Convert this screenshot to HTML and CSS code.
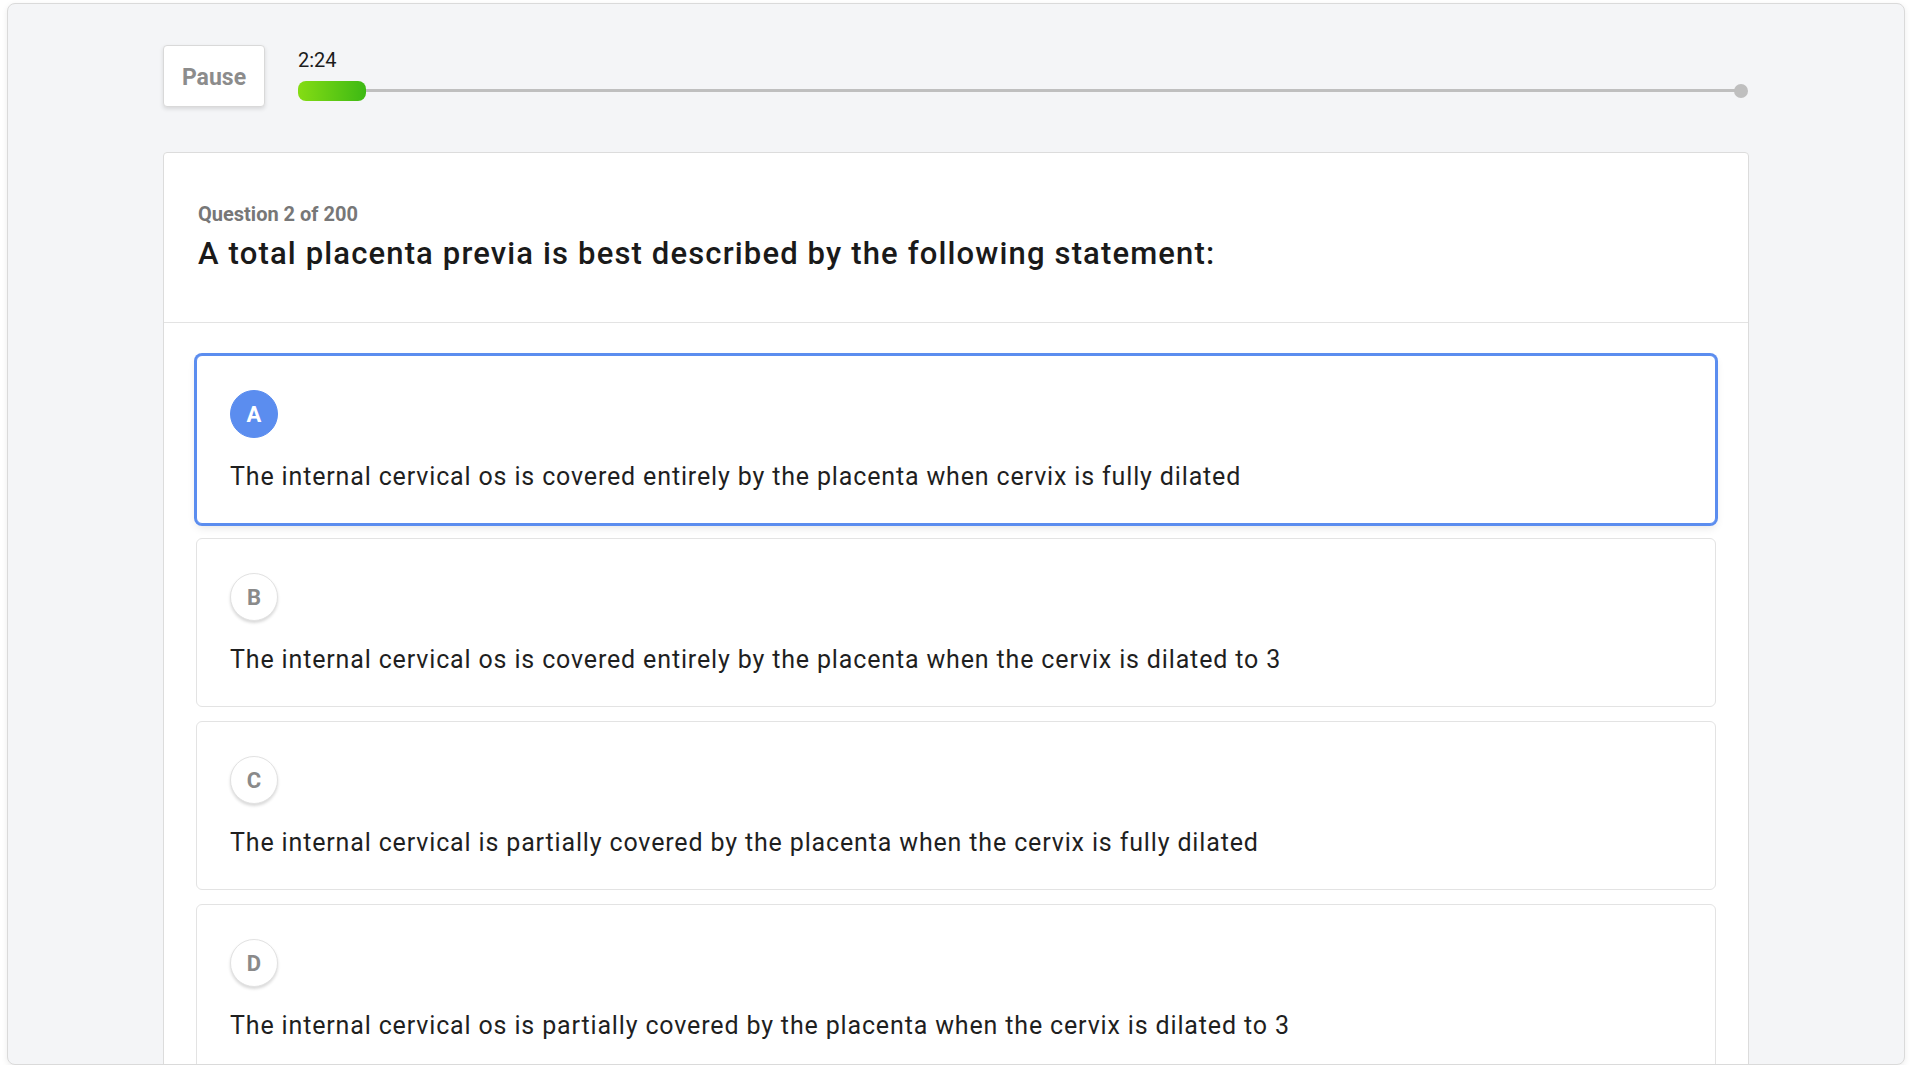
FILE: index.html
```html
<!DOCTYPE html>
<html lang="en">
<head>
<meta charset="utf-8">
<title>Quiz</title>
<link rel="stylesheet" href="styles.css">
</head>
<body>
<div class="frame">
  <div class="content">
    <div class="topbar">
      <button class="pause-btn">Pause</button>
      <div class="timer">
        <div class="timer-label">2:24</div>
        <div class="progress">
          <div class="progress-track"></div>
          <div class="progress-fill" style="width: 68px"></div>
          <div class="progress-end"></div>
        </div>
      </div>
    </div>

    <div class="card">
      <div class="card-header">
        <div class="q-count">Question 2 of 200</div>
        <h1 class="q-title">A total placenta previa is best described by the following statement:</h1>
      </div>
      <div class="card-body">
        <div class="option selected">
          <div class="badge">A</div>
          <div class="option-text">The internal cervical os is covered entirely by the placenta when cervix is fully dilated</div>
        </div>
        <div class="option">
          <div class="badge">B</div>
          <div class="option-text">The internal cervical os is covered entirely by the placenta when the cervix is dilated to 3</div>
        </div>
        <div class="option">
          <div class="badge">C</div>
          <div class="option-text">The internal cervical is partially covered by the placenta when the cervix is fully dilated</div>
        </div>
        <div class="option">
          <div class="badge">D</div>
          <div class="option-text">The internal cervical os is partially covered by the placenta when the cervix is dilated to 3</div>
        </div>
      </div>
    </div>
  </div>
</div>
</body>
</html>
```

FILE: styles.css
```css
* {
  box-sizing: border-box;
}

html, body {
  margin: 0;
  padding: 0;
  background: #ffffff;
  font-family: Roboto, "Liberation Sans", Arial, sans-serif;
}

.frame {
  margin: 3px 0 0 7px;
  width: 1898px;
  height: 1062px;
  background: #f4f5f7;
  border: 1px solid #dadada;
  border-radius: 8px;
  box-shadow: 0 2px 6px rgba(0, 0, 0, 0.08);
  overflow: hidden;
}

.content {
  width: 1586px;
  margin: 0 auto;
  padding-top: 41px;
}

.topbar {
  display: flex;
  align-items: flex-start;
  gap: 33px;
}

.pause-btn {
  width: 102px;
  height: 62px;
  background: #ffffff;
  border: 1px solid #d9d9d9;
  border-radius: 4px;
  box-shadow: 0 2px 4px rgba(0, 0, 0, 0.12);
  font-family: Roboto, "Liberation Sans", Arial, sans-serif;
  font-size: 23px;
  font-weight: 700;
  color: #8c8c8c;
  padding: 2px 0 0;
  cursor: pointer;
}

.timer {
  flex: 1;
  padding-top: 3px;
  padding-right: 1px;
}

.timer-label {
  font-size: 20px;
  line-height: 24px;
  color: #1c1c1c;
  margin-bottom: 9px;
}

.progress {
  position: relative;
  height: 20px;
}

.progress-track {
  position: absolute;
  left: 0;
  right: 7px;
  top: 8px;
  height: 3px;
  background: #bfbfbf;
}

.progress-fill {
  position: absolute;
  left: 0;
  top: 0;
  height: 20px;
  border-radius: 8px;
  background: linear-gradient(90deg, #85dc14 0%, #3db914 100%);
}

.progress-end {
  position: absolute;
  right: 0;
  top: 3px;
  width: 14px;
  height: 14px;
  border-radius: 50%;
  background: #bfbfbf;
}

.card {
  margin-top: 45px;
  background: #ffffff;
  border: 1px solid #dcdcdc;
  border-radius: 4px;
}

.card-header {
  padding: 49px 34px 50px;
  border-bottom: 1px solid #e3e3e3;
}

.q-count {
  font-size: 20px;
  line-height: 24px;
  font-weight: 700;
  color: #777777;
}

.q-title {
  margin: 10px 0 0;
  font-size: 31px;
  line-height: 36px;
  font-weight: 500;
  letter-spacing: 1.15px;
  color: #1a1a1a;
}

.card-body {
  padding: 32px 32px 40px;
  display: flex;
  flex-direction: column;
  gap: 14px;
}

.option {
  background: #ffffff;
  border: 1px solid #e3e3e3;
  border-radius: 6px;
  padding: 34px 33px 28px;
  height: 169px;
}

.option.selected {
  border-color: #5b8def;
  box-shadow: 0 0 0 2px #5b8def, 0 4px 8px rgba(0, 0, 0, 0.1);
}

.badge {
  width: 48px;
  height: 48px;
  border-radius: 50%;
  background: #ffffff;
  border: 1px solid #e2e2e2;
  box-shadow: 0 2px 3px rgba(0, 0, 0, 0.15);
  display: flex;
  align-items: center;
  justify-content: center;
  font-size: 22px;
  font-weight: 700;
  color: #8a8a8a;
}

.option.selected .badge {
  background: #5b8def;
  border-color: #5b8def;
  box-shadow: none;
  color: #ffffff;
}

.option-text {
  margin-top: 21px;
  font-size: 25px;
  line-height: 36px;
  letter-spacing: 0.85px;
  color: #1f1f1f;
}
```
